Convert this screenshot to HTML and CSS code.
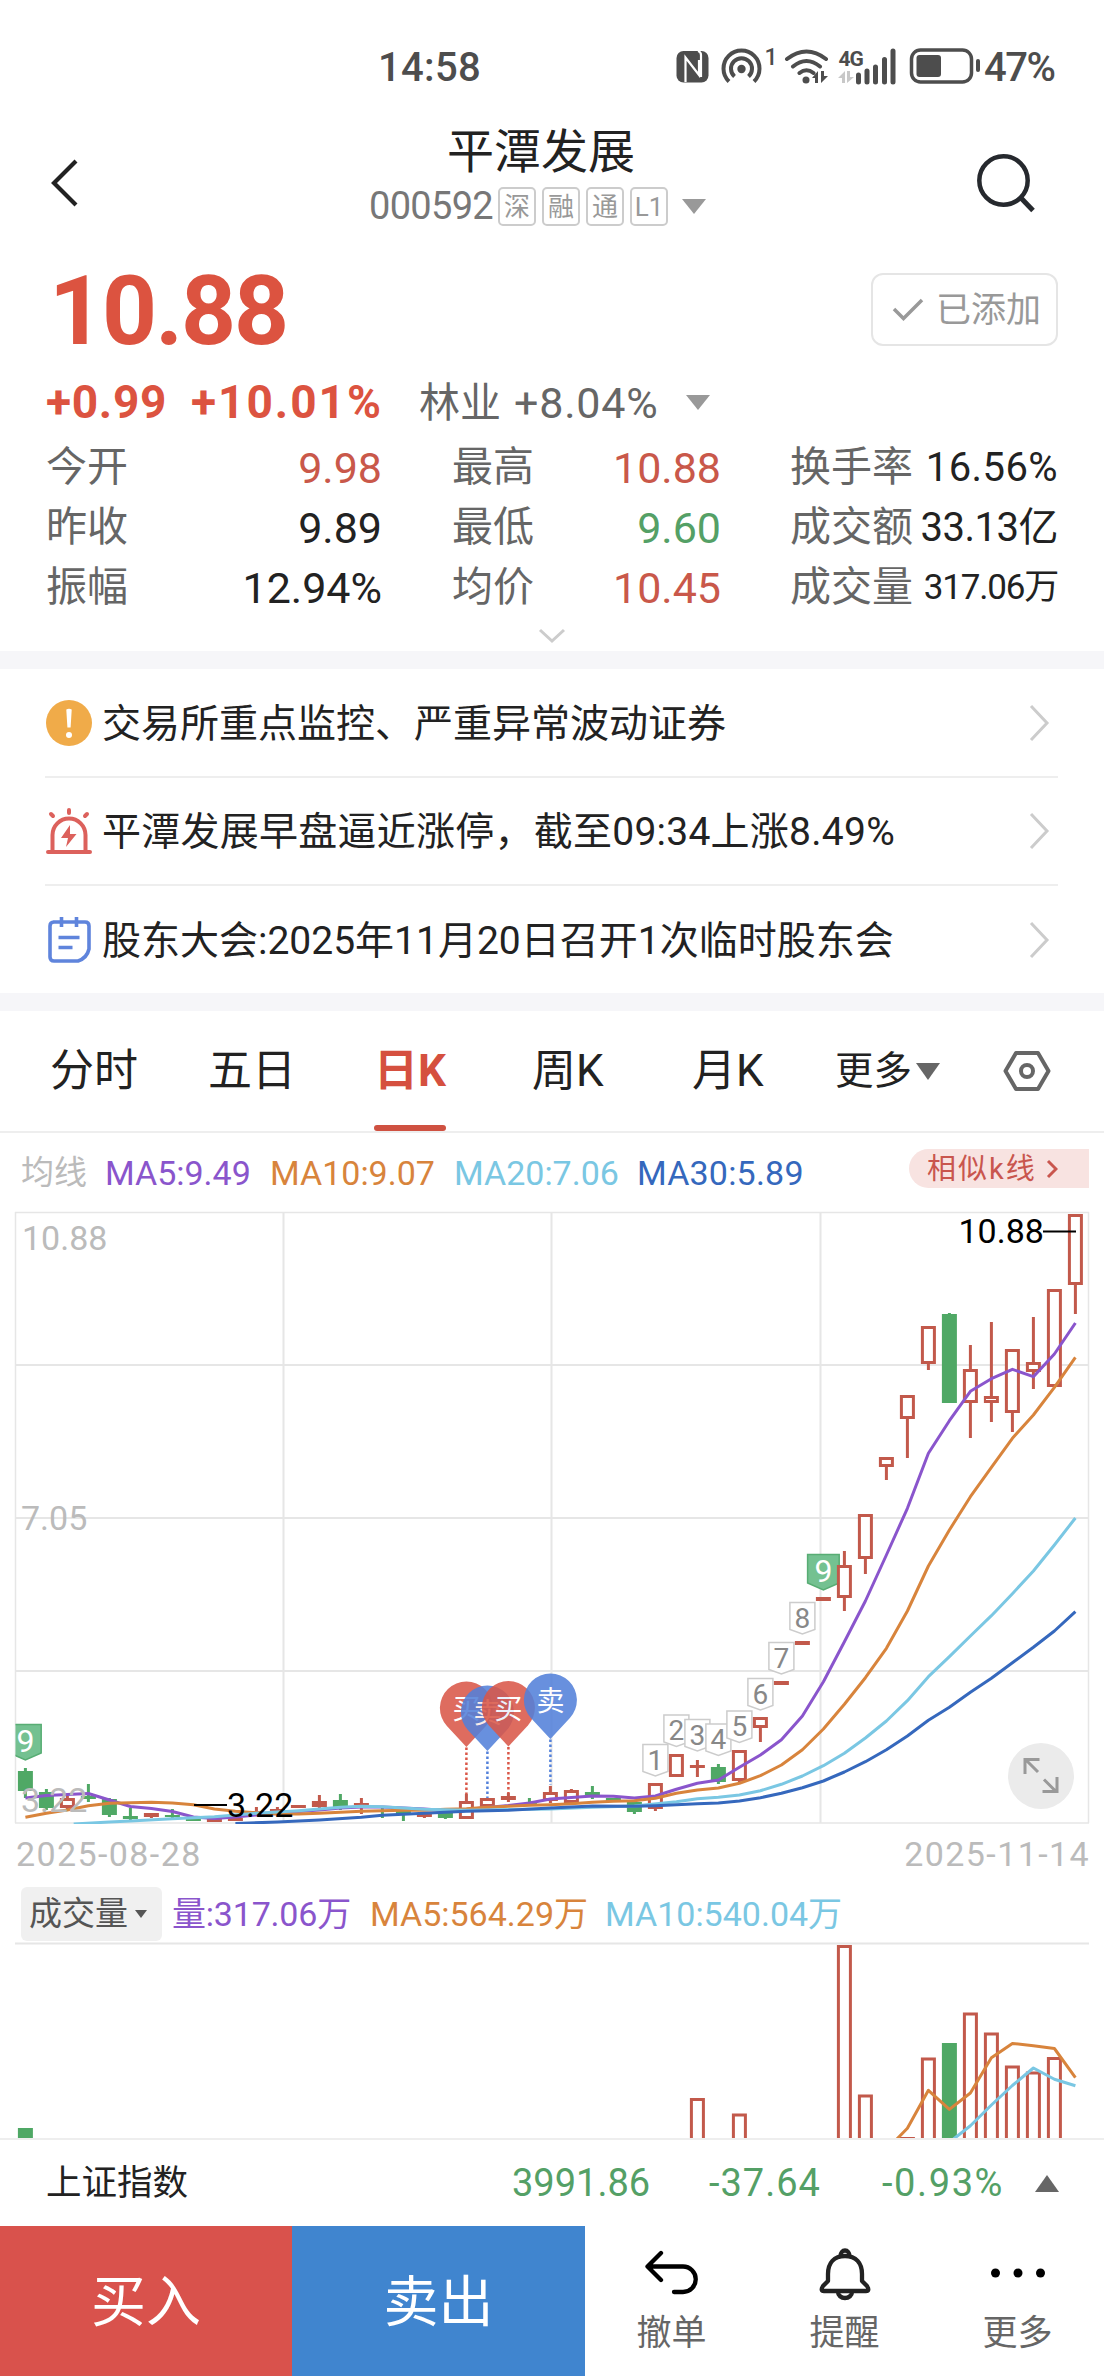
FILE: index.html
```html
<!DOCTYPE html>
<html lang="zh-CN">
<head>
<meta charset="utf-8">
<title>平潭发展 000592</title>
<link rel="stylesheet" href="styles.css">
</head>
<body>
<div class="status">
  <span class="status-time">14:58</span>
  <svg class="status-icons" width="308" height="40" viewBox="674 46 308 40">
    <rect x="676.5" y="51" width="32" height="31.500" rx="7" fill="#4d4d4d"/>
    <path d="M685.500 82V57.500L699 75V60M698 51q3 1 3 4V77" fill="none" stroke="#fff" stroke-width="2.200"/>
    <g fill="none" stroke="#4d4d4d" stroke-width="4">
      <path d="M729 81.500a18 18 0 1 1 25 0"/>
      <path d="M734.500 76.500a10.500 10.500 0 1 1 14 0"/>
      <path d="M787 59q19.500-15 39 0M793 66.500q13.500-11 27 0M799.500 73q7-5.500 14 0" stroke-linecap="round"/>
    </g>
    <circle cx="741.500" cy="69" r="4.200" fill="#4d4d4d"/>
    <circle cx="806" cy="80" r="3.500" fill="#4d4d4d"/>
    <path d="M812 78l6-7v12h-3v-5zM828 76l-7 7v-12h3v5z" fill="#4d4d4d"/>
    <text x="764.500" y="65" class="status-sup">1</text>
    <text x="838.500" y="65.500" class="status-net">4G</text>
    <path d="M838 78l7-7v12h-3v-5zM854 77l-7 6v-12h3v6z" fill="#c8c8c8"/>
    <path d="M858.500 75v7M867 71v11M875.500 67v15M884.500 59.500v22.500M893 51v31" stroke="#4d4d4d" stroke-width="5" stroke-linecap="round"/>
    <rect x="911.500" y="50" width="60" height="32" rx="9" fill="none" stroke="#4d4d4d" stroke-width="3.500"/>
    <rect x="916.500" y="55" width="24.500" height="22" rx="3" fill="#4d4d4d"/>
    <path d="M978 61v9" stroke="#4d4d4d" stroke-width="4" stroke-linecap="round"/>
  </svg>
  <span class="status-pct">47%</span>
</div>

<header class="header">
  <svg class="back" width="30" height="52" viewBox="0 0 30 52"><path d="M26 4L4 26l22 22" fill="none" stroke="#222" stroke-width="4.200"/></svg>
  <div class="title-box">
    <div class="title">平潭发展</div>
    <div class="code-row">
      <span class="code">000592</span>
      <span class="tag">深</span><span class="tag">融</span><span class="tag">通</span><span class="tag">L1</span>
      <svg class="code-tri" width="24" height="15" viewBox="0 0 24 15"><path d="M0 0h24L12 15z" fill="#999"/></svg>
    </div>
  </div>
  <svg class="search" width="60" height="60" viewBox="0 0 60 60"><g fill="none" stroke="#26292e"><circle cx="27.500" cy="27.500" r="24.200" stroke-width="4.500"/><path d="M45 45l12 12.500" stroke-width="5"/></g></svg>
</header>

<section class="quote">
  <div class="quote-top">
    <div class="price">10.88</div>
    <div class="added"><svg width="32" height="24" viewBox="0 0 32 24"><path d="M2 11l9.500 9.500L30 2" fill="none" stroke="#999" stroke-width="3.500"/></svg><span>已添加</span></div>
  </div>
  <div class="change">
    <b class="chg-abs">+0.99</b><b class="chg-pct">+10.01%</b>
    <span class="industry">林业</span><span class="ind-pct">+8.04%</span>
    <svg width="24" height="15" viewBox="0 0 24 15"><path d="M0 0h24L12 15z" fill="#999"/></svg>
  </div>
  <div class="stats">
    <span class="k">今开</span><span class="v red">9.98</span><span class="k">最高</span><span class="v red">10.88</span><span class="k">换手率</span><span class="v mid">16.56%</span>
    <span class="k">昨收</span><span class="v">9.89</span><span class="k">最低</span><span class="v green">9.60</span><span class="k">成交额</span><span class="v mid">33.13亿</span>
    <span class="k">振幅</span><span class="v">12.94%</span><span class="k">均价</span><span class="v red">10.45</span><span class="k">成交量</span><span class="v small">317.06万</span>
  </div>
  <svg class="more-down" width="28" height="16" viewBox="0 0 28 16"><path d="M2 2l12 11L26 2" fill="none" stroke="#ccc" stroke-width="3"/></svg>
</section>

<section class="alerts">
  <div class="alert">
    <svg width="48" height="48" viewBox="0 0 48 48"><circle cx="24" cy="24" r="23" fill="#f0ab49"/><path d="M21.300 10.500q2.700-1.500 5.400 0L25.600 28.500h-3.200z" fill="#fff"/><circle cx="24" cy="36" r="3" fill="#fff"/></svg>
    <span>交易所重点监控、严重异常波动证券</span>
    <svg class="arrow" width="22" height="38" viewBox="0 0 22 38"><path d="M2 2l16 17L2 36" fill="none" stroke="#ccc" stroke-width="3"/></svg>
  </div>
  <div class="alert wide">
    <svg width="48" height="48" viewBox="0 0 48 48"><g fill="none" stroke="#dc615c" stroke-width="4" stroke-linecap="round"><path d="M3 45h42M7.500 44V28a16.500 16.500 0 0 1 33 0v16M24 3v3M6 7l2 2M42 7l-2 2"/></g><path d="M25 18L16 31h7l-2 9 10.500-13H25z" fill="#dc615c"/></svg>
    <span>平潭发展早盘逼近涨停，截至09:34上涨8.49%</span>
    <svg class="arrow" width="22" height="38" viewBox="0 0 22 38"><path d="M2 2l16 17L2 36" fill="none" stroke="#ccc" stroke-width="3"/></svg>
  </div>
  <div class="alert">
    <svg width="48" height="48" viewBox="0 0 48 48"><g fill="none" stroke="#5f84dc" stroke-width="3.600"><path d="M8 6h32q4 0 4 4v23q-2 9-11 12H9q-4 0-4-4V10q0-4 4-4M16.500 1v10M31.500 1v10M13.500 21.500h21M13.500 31.500h14"/></g></svg>
    <span>股东大会:2025年11月20日召开1次临时股东会</span>
    <svg class="arrow" width="22" height="38" viewBox="0 0 22 38"><path d="M2 2l16 17L2 36" fill="none" stroke="#ccc" stroke-width="3"/></svg>
  </div>
</section>

<nav class="tabs">
  <span class="tab">分时</span><span class="tab">五日</span><span class="tab"><b class="active">日K</b></span><span class="tab">周K</span><span class="tab">月K</span>
  <span class="tab-more">更多<svg width="24" height="17" viewBox="0 0 24 17"><path d="M0 0h24L12 17z" fill="#666"/></svg></span>
  <svg width="48" height="42" viewBox="0 0 48 42"><g fill="none" stroke="#666" stroke-width="4"><path d="M13 3h22l10.500 18L35 39H13L2.500 21z" stroke-linejoin="round"/><circle cx="24" cy="21" r="6"/></g></svg>
</nav>

<div class="ma-row">
  <span class="ma-name">均线</span><span class="c5">MA5:9.49</span><span class="c10">MA10:9.07</span><span class="c20">MA20:7.06</span><span class="c30">MA30:5.89</span>
  <span class="similar">相似k线<svg width="12" height="20" viewBox="0 0 12 20"><path d="M2 2l8 8-8 8" fill="none" stroke="#c9564e" stroke-width="3"/></svg></span>
</div>

<svg class="chart" id="price" width="1104" height="630" viewBox="0 1203 1104 630"></svg>

<div class="dates"><span>2025-08-28</span><span>2025-11-14</span></div>

<div class="vol-row">
  <span class="chip">成交量<svg width="12" height="8" viewBox="0 0 12 8"><path d="M0 0h12L6 8z" fill="#555"/></svg></span>
  <span class="c5">量:317.06万</span><span class="c10">MA5:564.29万</span><span class="c20">MA10:540.04万</span>
</div>

<svg class="chart" id="volume" width="1104" height="196" viewBox="0 1942 1104 196"></svg>

<div class="index-row">
  <span class="index-name">上证指数</span><span class="ix1">3991.86</span><span class="ix2">-37.64</span><span class="ix3">-0.93%</span>
  <svg width="24" height="17" viewBox="0 0 24 17"><path d="M0 17h24L12 0z" fill="#666"/></svg>
</div>

<footer class="actions">
  <div class="buy">买入</div><div class="sell">卖出</div>
  <div class="act"><svg width="60" height="60" viewBox="0 0 60 60"><path d="M19 9L5.500 22.500 19 36M6 22.500h35a12.700 12.700 0 0 1 0 25.500H32" fill="none" stroke="#000" stroke-width="4.300" stroke-linecap="round" stroke-linejoin="round"/></svg><span>撤单</span></div>
  <div class="act"><svg width="60" height="60" viewBox="0 0 60 60"><g fill="none" stroke="#222" stroke-width="4.300" stroke-linejoin="round"><path d="M30 12C19 12 13 19 13 30v7l-5 5q-3 5 1 5h42q4 0 1-5l-5-5v-7C47 19 41 12 30 12z"/><path d="M25.500 12a4.500 5.500 0 0 1 9 0M23 48a7 6 0 0 0 14 0"/></g></svg><span>提醒</span></div>
  <div class="act"><svg width="60" height="60" viewBox="0 0 60 60"><circle cx="7.500" cy="29" r="4.500"/><circle cx="30" cy="29" r="4.500"/><circle cx="52.500" cy="29" r="4.500"/></svg><span>更多</span></div>
</footer>
<script src="chart.js"></script>
</body>
</html>
```
FILE: styles.css
```css
* { box-sizing: border-box; }
body { margin: 0; width: 1104px; background: #fff; color: #222; font-family: Roboto, "Noto Sans CJK SC", sans-serif; }
svg { display: block; flex: none; }
span, b { white-space: nowrap; }
.red { color: #c9584a !important; }
.green { color: #54a066 !important; }

.status { height: 110px; display: flex; align-items: flex-start; padding: 46px 0 0 378px; color: #4d4d4d; font-size: 40px; font-weight: 500; line-height: 43px; }
.status-time { width: 296px; letter-spacing: 0.300px; }
.status-pct { margin-left: 2px; letter-spacing: -1.5px; }
.status-sup { font-size: 23px; font-weight: 500; fill: #4d4d4d; }
.status-net { font-size: 21px; font-weight: 700; fill: #4d4d4d; letter-spacing: -1px; }

.header { height: 150px; display: flex; align-items: flex-start; padding-left: 50px; }
.back { margin-top: 47px; }
.title-box { width: 336px; margin-left: 290px; }
.title { height: 77px; line-height: 83px; font-size: 47px; text-align: center; padding-left: 6px; }
.code-row { display: flex; align-items: center; height: 39px; }
.code { width: 129px; margin-left: -1px; font-size: 38px; letter-spacing: -0.700px; color: #777; line-height: 41px; }
.tag { width: 38px; height: 39px; margin-right: 6px; border: 2px solid #ccc; border-radius: 5px; font-size: 26px; line-height: 36px; color: #999; text-align: center; }
.code-tri { margin-left: 8px; }
.search { margin: 43px 0 0 270px; }

.quote { height: 409px; padding: 0 46px; border-bottom: 18px solid #f6f6f9; }
.quote-top { height: 110px; display: flex; justify-content: space-between; align-items: flex-start; }
.price { font-size: 96px; font-weight: 700; line-height: 102px; color: #dc5340; padding-left: 3px; letter-spacing: -2px; }
.added { margin-top: 13px; width: 187px; height: 73px; border: 2px solid #e5e5e5; border-radius: 12px; display: flex; align-items: center; padding-left: 19px; gap: 12px; font-size: 35px; color: #999; }
.added span { line-height: 69px; height: 68px; }
.change { height: 65px; display: flex; align-items: center; font-size: 43px; line-height: 60px; color: #666; }
.change b { font-size: 46px; color: #dc5340; margin-top: -2px; }
.chg-abs { width: 145px; letter-spacing: 0.700px; }
.chg-pct { width: 228px; letter-spacing: 2px; }
.industry { width: 95px; font-size: 41px; }
.ind-pct { width: 172px; letter-spacing: 0.800px; }
.stats { display: grid; grid-template-columns: 110px 226px 111px 228px 127px 210px; grid-auto-rows: 60px; line-height: 60px; padding-top: 3px; height: 193px; }
.k { font-size: 41px; color: #666; line-height: 59px; }
.v { font-size: 43px; text-align: right; }
.stats .k:nth-child(6n+3) { margin-left: 70px; }
.stats .k:nth-child(6n+5) { margin-left: 69px; }
.stats .mid { font-size: 40px; letter-spacing: -0.500px; }
.stats .mid:nth-child(6) { letter-spacing: 0.400px; }
.stats .small { font-size: 35px; letter-spacing: -1.200px; }
.more-down { margin: 0 auto; }

.alerts { height: 342px; padding: 0 46px 0 45px; border-bottom: 18px solid #f6f6f9; }
.alert { height: 108px; display: flex; align-items: center; border-bottom: 2px solid #eee; font-size: 39px; }
.alert:first-child { height: 109px; }
.alert:last-child { border: 0; height: 107px; }
.alert span { margin-left: 9px; flex: 1; line-height: 54px; padding-top: 2px; }
.wide span { letter-spacing: 0.250px; }
.arrow { margin-right: 7px; }

.tabs { height: 122px; border-bottom: 2px solid #eee; display: grid; grid-template-columns: 158px 166px 158px 160px 143px 168px 48px; padding-left: 50px; align-items: center; font-size: 44px; }
.tab { height: 120px; line-height: 121px; }
.active { display: inline-block; height: 120px; color: #d5503f; font-weight: 700; position: relative; }
.active::after { content: ""; position: absolute; left: 0; bottom: 0; width: 72px; height: 6px; border-radius: 3px; background: #cf5141; }
.tab-more { display: flex; align-items: center; gap: 4px; font-size: 38.500px; line-height: 120px; }

.ma-row { height: 70px; display: flex; align-items: center; padding: 9px 15px 0 21px; font-size: 34px; line-height: 44px; }
.ma-row .c5 { width: 165px; }
.ma-row .c10 { width: 184px; }
.ma-row .c20 { width: 183px; }
.ma-row .c30 { letter-spacing: 0.200px; }
.ma-name { width: 84px; font-size: 33px; color: #bbb; }
.c5 { color: #8a55cc; }
.c10 { color: #d8843c; }
.c20 { color: #7ac7e3; }
.c30 { color: #3568bd; }
.similar { margin-left: auto; margin-top: -8px; width: 180px; height: 39px; background: #f8e3e1; border-radius: 20px 0 0 20px; display: flex; align-items: center; gap: 9px; padding-left: 18px; color: #c9564e; font-size: 29px; line-height: 40px; letter-spacing: 2px; }
.chart { overflow: hidden; }
.axis { font-size: 34px; fill: #bbb; }
.mark { font-size: 34px; fill: #000; }
.pin { font-size: 28px; fill: #fff; text-anchor: middle; }
.num { font-size: 28px; fill: #888; text-anchor: middle; }
.nine { font-size: 32px; fill: #fff; text-anchor: middle; }

.dates { height: 53px; display: flex; justify-content: space-between; padding: 0 14px 0 16px; font-size: 34px; line-height: 43px; color: #bbb; letter-spacing: 1.400px; }
.vol-row { height: 56px; display: flex; align-items: center; padding-left: 21px; font-size: 34px; line-height: 52px; }
.vol-row .c5 { width: 198px; letter-spacing: -0.200px; }
.vol-row .c10 { width: 235px; }
.chip { width: 141px; height: 54px; margin-right: 10px; border-radius: 6px; background: #f0f0f0; color: #555; font-size: 33px; line-height: 56px; display: flex; align-items: center; gap: 7px; padding-left: 8px; }

.index-row { height: 88px; border-top: 2px solid #eee; display: flex; align-items: center; padding-left: 46px; font-size: 38px; line-height: 60px; color: #54a066; }
.index-name { width: 466px; font-size: 35.500px; line-height: 62px; color: #222; }
.ix1 { width: 197px; }
.ix2 { width: 173px; letter-spacing: 1px; }
.ix3 { width: 153px; letter-spacing: 1.600px; }
.actions { height: 150px; display: grid; grid-template-columns: 292px 293px 173px 173px 173px; }
.buy, .sell { font-size: 55px; line-height: 152px; height: 150px; text-align: center; color: #fff; }
.buy { background: #d9524c; }
.sell { background: #4085cf; }
.act { display: flex; flex-direction: column; align-items: center; padding-top: 18px; font-size: 35px; color: #666; line-height: 60px; }
```
FILE: chart.js
```js
const RED = '#c2594b', GREEN = '#4fa865';
const X = i => 25.4 + 21 * i;

// [body top, body bottom, wick top, wick bottom, kind]; r = red, g = green
const candles = [
  [1771,1791,1768,1798,'g'],[1792,1808,1789,1810,'g'],[1798,1808,1796,1810,'r'],[1796,1799,1784,1802,'g'],
  [1799,1815,1798,1817,'g'],[1816,1819,1808,1820,'g'],[1813,1817,1813,1818,'r'],[1815,1817,1809,1818,'g'],
  [1819,1821,1819,1821,'g'],[1819,1822,1819,1822,'r'],[1818,1821,1818,1821,'r'],[1811,1813,1807,1814,'r'],
  [1809,1812,1807,1812,'r'],[1805,1808,1805,1808,'r'],[1801,1807,1795,1808,'r'],[1800,1807,1794,1810,'g'],
  [1803,1805,1798,1814,'r'],[1810,1812,1808,1818,'g'],[1811,1814,1811,1821,'g'],[1813,1817,1813,1818,'r'],
  [1813,1818,1813,1819,'g'],[1801,1819,1794,1819,'r'],[1798,1807,1798,1809,'r'],[1796,1800,1793,1802,'r'],
  [1803,1804,1798,1805,'g'],[1792,1801,1786,1803,'r'],[1790,1803,1789,1803,'r'],[1792,1797,1786,1799,'g'],
  [1798,1801,1798,1801,'g'],[1802,1812,1802,1814,'g'],[1783,1809,1783,1811,'r'],[1754,1777,1754,1777,'r'],
  [1765,1768,1760,1777,'r'],[1767,1782,1764,1784,'g'],[1750,1781,1750,1784,'r'],[1717,1728,1717,1742,'r'],
  [1681,1685,1681,1685,'r'],[1641,1645,1641,1645,'r'],[1597,1601,1597,1601,'r'],[1565,1598,1551,1611,'r'],
  [1514,1559,1514,1574,'r'],[1457,1467,1457,1480,'r'],[1395,1419,1395,1458,'r'],[1326,1364,1326,1370,'r'],
  [1314,1403,1313,1403,'g'],[1369,1403,1345,1438,'r'],[1396,1403,1322,1422,'r'],[1349,1413,1349,1432,'r'],
  [1362,1372,1317,1389,'r'],[1289,1387,1289,1387,'r'],[1214,1285,1214,1314,'r']
];

function candle(i, [top, bot, hi, lo, kind]) {
  const x = X(i), c = kind === 'r' ? RED : GREEN;
  let s = `<path d="M${x} ${hi}V${top}M${x} ${bot}V${lo}" stroke="${c}" stroke-width="3"/>`;
  s += kind === 'r' && bot - top > 5
    ? `<rect x="${x - 6}" y="${top + 1.5}" width="12" height="${bot - top - 3}" fill="#fff" stroke="${c}" stroke-width="3"/>`
    : `<rect x="${x - 7.5}" y="${top}" width="15" height="${bot - top}" fill="${c}"/>`;
  return s;
}

const line = (pts, color) =>
  `<polyline points="${pts.map(([i, y]) => X(i).toFixed(1) + ',' + y).join(' ')}" fill="none" stroke="${color}" stroke-width="3" stroke-linejoin="round"/>`;
const series = (start, ys) => ys.map((y, k) => [start + k, y]);

const ma5 = series(0, [1798,1795.5,1794.5,1793.5,1800,1806.5,1808.5,1811.5,1817,1818.5,1817,1815,1813.5,1811.5,1810,1808,1807,1807,1808,1809,1810.5,1809.5,1807.5,1805.5,1803,1799,1797.5,1796,1796.3,1798,1796,1789.3,1783.3,1780,1767.3,1755,1739.7,1716,1681.7,1641.7,1601,1555,1508.3,1453.3,1420.7,1391.3,1378.7,1369.3,1376.7,1354,1323]);
const ma10 = series(0, [1817.3,1813.3,1810,1805.7,1803.3,1802.7,1802.3,1803,1804.7,1809,1811.3,1812.7,1814,1814,1813.3,1812.3,1811.3,1810.7,1810.3,1810.3,1809.3,1808.7,1807.3,1806.3,1805.3,1804.7,1803.7,1802.3,1801.3,1800.7,1798.3,1793.3,1790,1788,1783.3,1775.7,1765,1749.7,1729,1704.3,1677.7,1648.3,1611,1566,1530,1496.7,1467.3,1438.3,1415,1387.3,1357.3]);
const ma20 = [[2.3,1824],[4,1822],[5,1821],[7,1818.7],[9,1816.7],[11,1813.3],[13,1810.7],[15,1807.3],[16,1806.3],[17,1806.7],[18,1808],[19,1809.3],[21,1810.3],[23,1809.6],[25,1809],[27,1807.3],[29,1806],[31,1801.7],[32,1798.7],[33,1797.3],[34,1795],[35,1790.7],[36,1784.3],[37,1776],[38,1765.7],[39,1753.3],[40,1738],[41,1721],[42,1700.7],[43,1676.7],[44,1656.7],[45,1636],[46,1615.7],[47,1593.7],[48,1571],[49,1545],[50,1518]];
const ma30 = [[10,1823.5],[12,1822],[14,1820],[16,1817.3],[17,1815.3],[19,1813.3],[21,1811.3],[23,1810.3],[25,1808],[27,1806],[29,1806.3],[30,1805.7],[32,1803.7],[33,1803],[34,1801],[35,1797.7],[36,1793.3],[37,1787.7],[38,1781],[39,1772],[40,1761.7],[41,1749.7],[42,1736],[43,1720.3],[44,1707.3],[45,1692.3],[46,1678.3],[47,1662.7],[48,1647.3],[49,1631],[50,1611.7]];

let s = '<g stroke="#e6e6e6" stroke-width="2"><path d="M15 1212.500h1074M15 1823h1074M15.500 1212v611M1088.500 1212v611" stroke-width="1.500"/><path d="M15 1365h1074M15 1518h1074M15 1671h1074M283.500 1212v611M551.500 1212v611M820.500 1212v611"/></g>';

// Signal tags sit under the candles that follow them
function nine(i, top) {
  const x = X(i);
  return `<path d="M${x - 15.8} ${top}h31.600v28.500l-15.800 7-15.800-7z" fill="#74c191" stroke="#58ad74" stroke-width="1.500"/><text class="nine" x="${x}" y="${top + 27}">9</text>`;
}
s += nine(38, 1554.5);
[1744.5, 1715, 1719.5, 1724, 1711, 1678.5, 1642.5, 1602.5].forEach((top, k) => {
  const x = X(30 + k);
  s += `<path d="M${x - 12.5} ${top}h25v27l-12.500 4.500-12.500-4.500z" fill="#fff" stroke="#ccc" stroke-width="1.500"/><text class="num" x="${x}" y="${top + 25}">${k + 1}</text>`;
});
s += '<clipPath id="plot"><rect x="15.500" y="1212" width="1073" height="612"/></clipPath><g clip-path="url(#plot)">' + nine(0, 1724.5);
candles.forEach((c, i) => { s += candle(i, c); });
s += line(ma5, '#8a55cc') + line(ma10, '#d8843c') + line(ma20, '#7ac7e3') + line(ma30, '#3568bd') + '</g>';

[[21,1681.5,1794,'买','#da5748'],[22,1685.5,1798,'卖','#5280da'],[23,1681,1793,'买','#da5748'],[25,1673.5,1785,'卖','#5280da']].forEach(([i, top, end, t, c]) => {
  const x = X(i), cy = top + 26.5;
  s += `<path d="M${x} ${top + 66}V${end}" stroke="${c}" stroke-width="2.500" stroke-dasharray="2.500 2.500"/>`
    + `<g opacity=".87"><path d="M${x} ${top + 65.5}L${x - 19.5} ${cy + 18}A26.500 26.500 0 1 1 ${x + 19.5} ${cy + 18}z" fill="${c}"/><text class="pin" x="${x}" y="${cy + 11}">${t}</text></g>`;
});

s += '<text class="axis" x="22" y="1250">10.88</text><text class="axis" x="21" y="1530">7.05</text><text class="axis" x="21" y="1812">3.22</text>'
  + '<text class="mark" x="227" y="1817">3.22</text><text class="mark" x="958.500" y="1243">10.88</text><path d="M194 1805h33M1043 1231.500h33" stroke="#000" stroke-width="2"/>'
  + '<circle cx="1041" cy="1776" r="33" fill="#ebebeb"/><path d="M1025 1774v-14.500h14.500M1026 1760l12 12M1044 1779.500l12 12M1057 1777v14.500h-14.500" fill="none" stroke="#999" stroke-width="3"/>';
document.getElementById('price').innerHTML = s;

const volumes = [[0,2128,'g'],[32,2098],[34,2113.5],[39,1945],[40,2094.5],[42,2137],[43,2057.5],[44,2043,'g'],[45,2012.5],[46,2032.5],[47,2065.5],[48,2071.5],[49,2057]];
let v = '<path d="M15 1943.500h1074" stroke="#e6e6e6" stroke-width="2"/>';
volumes.forEach(([i, top, k]) => {
  v += k ? `<rect x="${X(i) - 7.5}" y="${top}" width="15" height="${2140 - top}" fill="${GREEN}"/>`
    : `<rect x="${X(i) - 6}" y="${top + 1.5}" width="12" height="${2150 - top}" fill="none" stroke="${RED}" stroke-width="3"/>`;
});
v += line([[41.5,2139],[42,2128.2],[43,2090.3],[44,2109.4],[45,2093],[46,2057.8],[47,2043.4],[48,2045.8],[49,2048.5],[50,2077.6]], '#d8843c')
  + line([[44.2,2139],[45,2125.8],[46,2105],[47,2085.5],[48,2068],[49,2079.3],[50,2085.8]], '#7ac7e3');
document.getElementById('volume').innerHTML = v;
```
